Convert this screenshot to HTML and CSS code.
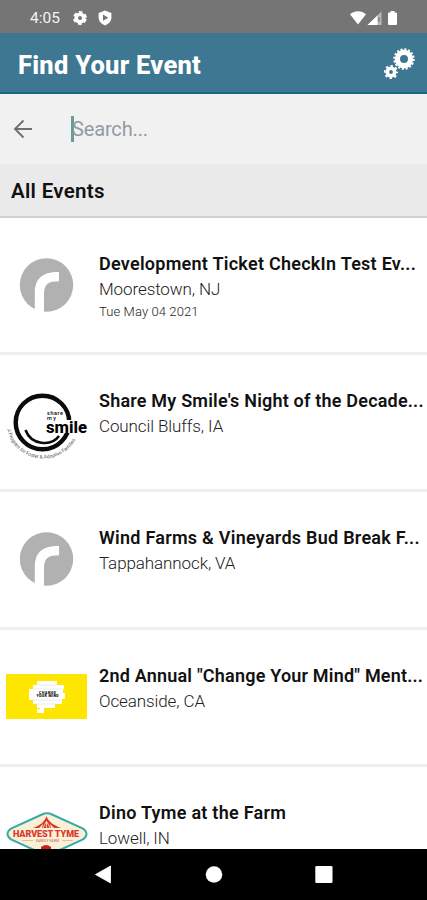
FILE: index.html
```html
<!DOCTYPE html>
<html lang="en">
<head>
    <meta charset="UTF-8">
    <meta name="viewport" content="width=device-width, initial-scale=1.0">
    <title>Find Your Event</title>
    <link rel="stylesheet" href="styles.css">
</head>
<body>
    <div class="status-bar">
        <span class="time">4:05</span>
        <svg class="status-gear" width="14" height="16" viewBox="0 0 14 16">
            <circle cx="7" cy="8" r="3.8" fill="none" stroke="#fff" stroke-width="3.6"/>
            <circle cx="7" cy="8" r="5.6" fill="none" stroke="#fff" stroke-width="2.6" stroke-dasharray="3.5 2.364" stroke-dashoffset="4.7"/>
        </svg>
        <svg class="status-shield" width="14" height="16" viewBox="0 0 14 16">
            <path d="M7 .6L13.4 3v4.4c0 3.6-2.6 6.4-6.4 8-3.8-1.6-6.4-4.4-6.4-8V3z" fill="#fff"/>
            <path d="M5 4.6L10.4 7.7 5 10.8z" fill="#757575"/>
        </svg>
        <svg class="signals" width="52" height="18" viewBox="0 0 52 18">
            <path d="M1 5.2C5.5 1.1 12.5 1.1 17 5.2L9 15.6z" fill="#fff"/>
            <path d="M32.5 2.5V16H18.5z" fill="#b9b9b9"/>
            <path d="M28.5 6.5V16H18.5z" fill="#fff"/>
            <path d="M29.3 8h1.3v5h-1.3z" fill="#757575"/>
            <path d="M41.5 2h4v1.5H47q1 0 1 1V15q0 1-1 1h-7q-1 0-1-1V4.5q0-1 1-1h1.5z" fill="#fff"/>
        </svg>
    </div>

    <header class="app-bar">
        <h1>Find Your Event</h1>
        <svg class="settings" width="34" height="34" viewBox="0 0 34 34">
            <circle cx="21" cy="12" r="6.6" fill="none" stroke="#fff" stroke-width="5.2"/>
            <circle cx="21" cy="12" r="9.6" fill="none" stroke="#fff" stroke-width="2.2" stroke-dasharray="2.1 1.67"/>
            <circle cx="8" cy="25" r="3.7" fill="none" stroke="#fff" stroke-width="3.6"/>
            <circle cx="8" cy="25" r="6" fill="none" stroke="#fff" stroke-width="2.2" stroke-dasharray="2.4 2.312" stroke-dashoffset="1.2"/>
        </svg>
    </header>

    <div class="search-bar">
        <svg class="back" width="20" height="20" viewBox="0 0 20 20">
            <path d="M19 10H2M10.5 1.5L2 10l8.5 8.5" fill="none" stroke="#707070" stroke-width="1.9"/>
        </svg>
        <span class="cursor"></span>
        <span class="placeholder">Search...</span>
    </div>

    <h2 class="section-title">All Events</h2>

    <main class="events">
        <div class="event">
            <div class="logo">
                <svg width="81" height="54" viewBox="0 0 81 54">
                    <circle cx="40.5" cy="27" r="26.7" fill="#b1b1b1"/>
                    <path d="M28.8 54V35C28.8 21 36 13.8 53 14v9.2C42 23.2 38 26 38 37v17z" fill="#fff"/>
                </svg>
            </div>
            <div class="info">
                <h3>Development Ticket CheckIn Test Ev...</h3>
                <p>Moorestown, NJ</p>
                <p class="date">Tue May 04 2021</p>
            </div>
        </div>
        <div class="event">
            <div class="logo">
                <svg width="84" height="78" viewBox="0 0 84 78">
                    <circle cx="36.5" cy="39.5" r="26.8" fill="none" stroke="#0b0b0b" stroke-width="4.4"/>
                    <path d="M41 37h44v13H41z" fill="#fff"/>
                    <path d="M19.5 47C25 62 45 64 53 53" fill="none" stroke="#0b0b0b" stroke-width="2.6"/>
                    <text class="smile-small" x="41" y="32" textLength="16">share</text>
                    <text class="smile-small" x="41" y="37" textLength="9">my</text>
                    <text class="smile-big" x="40" y="49.5" textLength="41" lengthAdjust="spacingAndGlyphs">smile</text>
                    <path id="arc" d="M1 46.5A37 37 0 0 0 71 53.5" fill="none"/>
                    <text class="smile-arc"><textPath href="#arc" textLength="89">A Program for Foster &amp; Adoptive Families</textPath></text>
                </svg>
            </div>
            <div class="info">
                <h3 class="tight">Share My Smile's Night of the Decade...</h3>
                <p>Council Bluffs, IA</p>
            </div>
        </div>
        <div class="event">
            <div class="logo">
                <svg width="81" height="54" viewBox="0 0 81 54">
                    <circle cx="40.5" cy="27" r="26.7" fill="#b1b1b1"/>
                    <path d="M28.8 54V35C28.8 21 36 13.8 53 14v9.2C42 23.2 38 26 38 37v17z" fill="#fff"/>
                </svg>
            </div>
            <div class="info">
                <h3>Wind Farms &amp; Vineyards Bud Break F...</h3>
                <p>Tappahannock, VA</p>
            </div>
        </div>
        <div class="event">
            <div class="logo">
                <svg width="81" height="45" viewBox="0 0 81 45">
                    <path d="M0 0h81v45H0z" fill="#ffe600"/>
                    <path d="M31 7h20v4h7v4h-1v4h2v6h-3v5h-7v4H38v5h-7v-4h3v-1h-3v-4h-4v-4h-4V15h4v-4h4z" fill="#fff"/>
                    <path d="M31 11h20M27 15h30M26 26h30M29 30h22" stroke="#dedede" stroke-width=".6"/>
                    <text class="mind" x="33" y="19.5" textLength="17">CHANGE</text>
                    <text class="mind" x="30.5" y="23" textLength="22">YOUR MIND</text>
                </svg>
            </div>
            <div class="info">
                <h3 class="tight">2nd Annual "Change Your Mind" Ment...</h3>
                <p>Oceanside, CA</p>
            </div>
        </div>
        <div class="event">
            <div class="logo">
                <svg width="82" height="44" viewBox="0 0 82 44">
                    <path d="M36 2.5Q41 0 46 2.5L77 16.5Q84 22 77 27.5L46 41.5Q41 44 36 41.5L5 27.5Q-2 22 5 16.5z" fill="#fbf0d6" stroke="#35aaa8" stroke-width="2"/>
                    <path d="M40.5 4C39 9.5 34 13.5 27 16h6l4-4-1 4h9l-1-4 4 4h7C48 13.5 42 9.5 40.5 4z" fill="#d8392c"/>
                    <path d="M40.5 9v7M37 16l3-6M44 16l-3-6" stroke="#fbf0d6" stroke-width=".8"/>
                    <text class="harvest" x="7" y="25" textLength="66" lengthAdjust="spacing">HARVEST TYME</text>
                    <text class="farm" x="30" y="30" textLength="23">FAMILY FARM</text>
                    <path d="M16 28.5h11M56 28.5h11" stroke="#e0a08c" stroke-width=".7"/>
                    <path d="M35 38v-3q5-4 10 0v3z" fill="#c8231b"/>
                </svg>
            </div>
            <div class="info">
                <h3>Dino Tyme at the Farm</h3>
                <p>Lowell, IN</p>
            </div>
        </div>
    </main>

    <nav class="nav-bar">
        <svg width="427" height="51" viewBox="0 0 427 51">
            <path d="M95.5 25.5L110.5 17v17z" fill="#fff" stroke="#fff" stroke-width=".8" stroke-linejoin="round"/>
            <circle cx="214" cy="25.5" r="8.3" fill="#fff"/>
            <rect x="315.3" y="17" width="17.2" height="17" rx="1.3" fill="#fff"/>
        </svg>
    </nav>
</body>
</html>
```
FILE: styles.css
```css
* {
    box-sizing: border-box;
}
body {
    display: flex;
    flex-direction: column;
    width: 427px;
    height: 900px;
    margin: 0;
    overflow: hidden;
    font-family: Roboto, sans-serif;
    background-color: #fff;
    color: #111;
}
h1,
h2,
h3,
p {
    margin: 0;
    white-space: nowrap;
}
svg {
    display: block;
    flex: none;
}
.status-bar {
    display: flex;
    align-items: center;
    flex: none;
    height: 33px;
    padding: 2px 26px 0 30px;
    background-color: #757575;
    color: #f3f3f3;
}
.time {
    width: 43px;
    font-size: 15.5px;
}
.status-shield {
    margin-left: 11px;
}
.signals {
    margin-left: auto;
}
.app-bar {
    display: flex;
    align-items: center;
    justify-content: space-between;
    flex: none;
    height: 61px;
    padding: 3px 10px 0 18px;
    background-color: #3e7791;
    border-bottom: 2px solid #14687f;
}
.app-bar h1 {
    padding-top: 2px;
    font-size: 25.5px;
    line-height: 30px;
    font-weight: 800;
    letter-spacing: 0.25px;
    color: #fff;
}
.search-bar {
    display: flex;
    align-items: center;
    flex: none;
    height: 70px;
    padding-left: 13px;
    background-color: #f1f1f1;
}
.cursor {
    width: 3px;
    height: 26px;
    margin-left: 38px;
    margin-right: -2px;
    background-color: #6b9c90;
}
.placeholder {
    font-size: 20px;
    letter-spacing: -0.15px;
    color: #929ba3;
}
.section-title {
    flex: none;
    height: 54px;
    padding-left: 11px;
    font-size: 20.5px;
    line-height: 54px;
    font-weight: 600;
    letter-spacing: 0.3px;
    background-color: #eaeaea;
    border-bottom: 2px solid #d0d0d0;
}
.events {
    flex: 1;
    min-height: 0;
    overflow: hidden;
}
.event {
    display: flex;
    height: 137.2px;
    border-bottom: 3px solid #eee;
}
.logo {
    display: flex;
    align-items: center;
    flex: none;
    width: 99px;
    padding-left: 6px;
}
.info {
    padding-top: 33px;
}
.info h3 {
    font-size: 18px;
    line-height: 26px;
    font-weight: 600;
    letter-spacing: 0.26px;
}
.info .tight {
    letter-spacing: 0.2px;
}
.info p {
    font-size: 17px;
    line-height: 24px;
    font-weight: 300;
    letter-spacing: -0.1px;
    color: #222;
}
.info .date {
    font-size: 13px;
    line-height: 22px;
    letter-spacing: 0.1px;
}
.smile-small {
    font-size: 5.5px;
    font-weight: 500;
}
.smile-big {
    font-size: 16px;
    font-weight: 800;
}
.smile-arc {
    font-size: 5px;
    fill: #555;
}
.mind {
    font-size: 3.5px;
    font-weight: 900;
}
.harvest {
    font-size: 9px;
    font-weight: 900;
    fill: #d8392c;
}
.farm {
    font-size: 3.5px;
    fill: #c0604c;
}
.nav-bar {
    flex: none;
    height: 51px;
    background-color: #000;
}
```
